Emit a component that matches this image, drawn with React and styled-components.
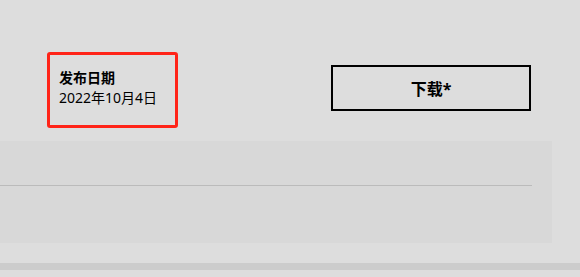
import React from "react";
import styled, { createGlobalStyle } from "styled-components";

const Global = createGlobalStyle`
  html, body { margin: 0; padding: 0; background: #dddddd; }
  body { font-family: "Noto Sans", "Noto Sans CJK SC", sans-serif; color: #000; }
  * { box-sizing: border-box; }
`;

const Page = styled.div`
  width: 580px;
  height: 277px;
  overflow: hidden;
  background: #dddddd;
`;

const Header = styled.div`
  display: flex;
  align-items: flex-start;
  padding: 52px 0 0 47px;
`;

const DateCard = styled.div`
  width: 131px;
  height: 76px;
  border: 3px solid #ff2418;
  border-radius: 3px;
  padding: 13px 0 0 9px;
  display: flex;
  flex-direction: column;
`;

const Label = styled.div`
  font-size: 14px;
  font-weight: 700;
  line-height: 20px;
`;

const Value = styled.div`
  font-size: 14px;
  line-height: 20px;
`;

const DownloadButton = styled.button`
  margin: 13px 0 0 153px;
  width: 200px;
  height: 46px;
  border: 2px solid #000;
  background: transparent;
  font-family: "Noto Sans", "Noto Sans CJK SC", sans-serif;
  font-size: 16px;
  font-weight: 700;
  color: #000;
  display: flex;
  align-items: center;
  justify-content: center;
  padding: 0;
`;

const Panel = styled.div`
  margin-top: 13px;
  width: 552px;
  height: 102px;
  background: #d8d8d8;
  padding: 44px 20px 0 0;
`;

const Rule = styled.div`
  height: 1px;
  background: #bbbbbb;
`;

const Strip = styled.div`
  margin-top: 20px;
  height: 7px;
  background: #cccccc;
`;

export default function App() {
  return (
    <Page>
      <Global />
      <Header>
        <DateCard>
          <Label>发布日期</Label>
          <Value>2022年10月4日</Value>
        </DateCard>
        <DownloadButton>下载*</DownloadButton>
      </Header>
      <Panel>
        <Rule />
      </Panel>
      <Strip />
    </Page>
  );
}
